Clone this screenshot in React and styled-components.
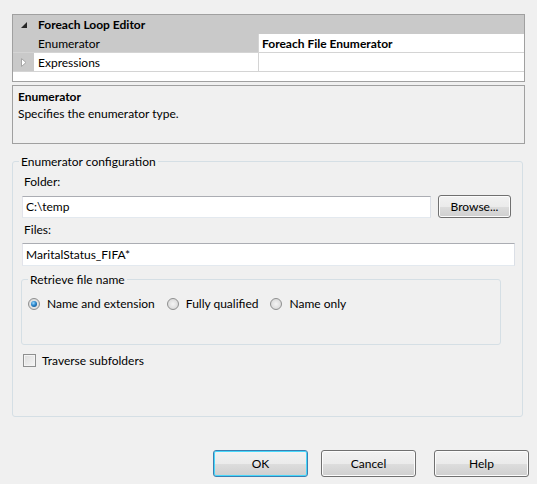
import React from 'react';
import styled, { createGlobalStyle } from 'styled-components';

const GlobalStyle = createGlobalStyle`
  html, body {
    margin: 0;
    background: #f0f0f0;
  }
  body {
    font-family: Lato, "Liberation Sans", sans-serif;
    font-size: 12px;
    color: #000;
  }
`;

const ExpandedIcon = () => (
  <svg width="6" height="6" viewBox="0 0 6 6">
    <polygon points="6,0 6,6 0,6" fill="#262626" />
  </svg>
);

const CollapsedIcon = () => (
  <svg width="6" height="9" viewBox="0 0 6 9">
    <polygon points="0.5,0.5 5,4.5 0.5,8.5" fill="#fff" stroke="#a6a6a6" />
  </svg>
);

const App = () => {
  return (
    <>
      <GlobalStyle />
      <Dialog>
        <PropertyGrid>
          <HeaderRow>
            <Margin><ExpandedIcon /></Margin>
            <HeaderText>Foreach Loop Editor</HeaderText>
          </HeaderRow>
          <GridRow>
            <Margin />
            <NameCell selected>Enumerator</NameCell>
            <ValueCell bold>Foreach File Enumerator</ValueCell>
          </GridRow>
          <GridRow>
            <Margin><CollapsedIcon /></Margin>
            <NameCell>Expressions</NameCell>
            <ValueCell />
          </GridRow>
        </PropertyGrid>

        <Description>
          <DescTitle>Enumerator</DescTitle>
          <div>Specifies the enumerator type.</div>
        </Description>

        <GroupBox>
          <Legend>Enumerator configuration</Legend>
          <GroupContent>
            <FieldLabel>Folder:</FieldLabel>
            <FieldRow>
              <TextBox>C:\temp</TextBox>
              <BrowseButton>Browse...</BrowseButton>
            </FieldRow>
            <FieldLabel>Files:</FieldLabel>
            <FieldRow>
              <TextBox tall>MaritalStatus_FIFA*</TextBox>
            </FieldRow>

            <InnerGroup>
              <InnerLegend>Retrieve file name</InnerLegend>
              <RadioRow>
                <RadioOption>
                  <Radio checked />
                  Name and extension
                </RadioOption>
                <RadioOption>
                  <Radio />
                  Fully qualified
                </RadioOption>
                <RadioOption>
                  <Radio />
                  Name only
                </RadioOption>
              </RadioRow>
            </InnerGroup>

            <CheckOption>
              <CheckBox />
              Traverse subfolders
            </CheckOption>
          </GroupContent>
        </GroupBox>

        <ButtonBar>
          <DialogButton isDefault>OK</DialogButton>
          <DialogButton>Cancel</DialogButton>
          <DialogButton gap={18}>Help</DialogButton>
        </ButtonBar>
      </Dialog>
    </>
  );
};

const Dialog = styled.div`
  width: 537px;
  height: 484px;
  box-sizing: border-box;
  padding: 14px 12px 7px 12px;
  display: flex;
  flex-direction: column;
`;

const PropertyGrid = styled.div`
  border: 1px solid #a0a0a0;
  background: #fff;
  height: 66px;
`;

const HeaderRow = styled.div`
  display: flex;
  align-items: center;
  height: 19px;
  background: #c9c9c9;
`;

const GridRow = styled.div`
  display: grid;
  grid-template-columns: 21px 224px 1fr;
  height: 18px;
  border-bottom: 1px solid #d4d4d4;
`;

const Margin = styled.div`
  width: 21px;
  height: 100%;
  background: #c9c9c9;
  display: flex;
  align-items: center;
  justify-content: center;
  padding-left: 1px;
  box-sizing: border-box;
`;

const HeaderText = styled.div`
  font-weight: bold;
  padding-left: 4px;
`;

const NameCell = styled.div`
  display: flex;
  align-items: center;
  padding-left: 4px;
  background: ${(p) => (p.selected ? '#c9c9c9' : '#fff')};
`;

const ValueCell = styled.div`
  display: flex;
  align-items: center;
  padding-left: 3px;
  border-left: 1px solid #d4d4d4;
  font-weight: ${(p) => (p.bold ? 'bold' : 'normal')};
`;

const Description = styled.div`
  margin-top: 3px;
  height: 59px;
  box-sizing: border-box;
  border: 1px solid #a0a0a0;
  padding: 2px 5px 0;
  line-height: 17px;
`;

const DescTitle = styled.div`
  font-weight: bold;
`;

const GroupBox = styled.fieldset`
  margin: 10px 2px 0 0;
  padding: 0;
  height: 263px;
  box-sizing: border-box;
  border: 1px solid #d5dfe5;
  border-radius: 3px;
  min-width: 0;
`;

const Legend = styled.legend`
  margin-left: 6px;
  padding: 0 2px;
  line-height: 15px;
`;

const GroupContent = styled.div`
  padding: 5px 7px 0 9px;
  display: flex;
  flex-direction: column;
`;

const FieldLabel = styled.div`
  line-height: 15px;
  padding-left: 2px;
  margin-bottom: 6px;
`;

const FieldRow = styled.div`
  display: flex;
  align-items: center;
  gap: 7px;
  margin-bottom: 4px;
`;

const TextBox = styled.div`
  flex: 1;
  height: ${(p) => (p.tall ? 23 : 22)}px;
  box-sizing: border-box;
  background: #fff;
  border: 1px solid;
  border-color: #abadb3 #dbdfe6 #e3e9ef #e2e3ea;
  padding-left: 3px;
  display: flex;
  align-items: center;
`;

const ButtonBase = styled.button`
  font: inherit;
  color: #000;
  box-sizing: border-box;
  border: 1px solid #707070;
  border-radius: 3px;
  background: linear-gradient(#f2f2f2 0%, #ebebeb 50%, #dddddd 51%, #cfcfcf 100%);
  box-shadow: inset 0 0 0 1px #fcfcfc;
  padding: 0;
`;

const BrowseButton = styled(ButtonBase)`
  width: 73px;
  height: 23px;
  margin-right: 4px;
`;

const InnerGroup = styled.fieldset`
  margin: 2px 14px 0 -1px;
  padding: 0;
  height: 73px;
  box-sizing: border-box;
  border: 1px solid #d5dfe5;
  border-radius: 3px;
  min-width: 0;
`;

const InnerLegend = styled.legend`
  margin-left: 6px;
  padding: 0 2px;
  line-height: 15px;
`;

const RadioRow = styled.div`
  display: flex;
  align-items: center;
  gap: 12px;
  padding: 9px 0 0 6px;
`;

const RadioOption = styled.label`
  display: flex;
  align-items: center;
  gap: 7px;
`;

const Radio = styled.span`
  position: relative;
  width: 12px;
  height: 12px;
  box-sizing: border-box;
  border-radius: 50%;
  border: 1px solid #8e8f8f;
  background: radial-gradient(circle at 50% 50%, #f4f4f4 0%, #dcdcdc 70%, #cfcfcf 100%);

  &::after {
    content: '';
    display: ${(p) => (p.checked ? 'block' : 'none')};
    position: absolute;
    left: 2px;
    top: 2px;
    width: 6px;
    height: 6px;
    border-radius: 50%;
    background: radial-gradient(circle at 40% 35%, #9fdcff 0%, #2a86cc 45%, #0d3f72 100%);
  }
`;

const CheckOption = styled.label`
  display: flex;
  align-items: center;
  gap: 6px;
  margin: 8px 0 0 1px;
  line-height: 15px;
`;

const CheckBox = styled.span`
  width: 13px;
  height: 13px;
  box-sizing: border-box;
  border: 1px solid #8e8f8f;
  background: linear-gradient(135deg, #dcdcdc 0%, #f6f6f6 100%);
  box-shadow: inset 0 0 0 1px #f4f4f4;
`;

const ButtonBar = styled.div`
  margin-top: auto;
  display: flex;
  justify-content: flex-end;
  margin-right: -4px;
`;

const DialogButton = styled(ButtonBase)`
  width: 95px;
  height: 27px;
  margin-left: ${(p) => p.gap || 13}px;
  border-color: ${(p) => (p.isDefault ? '#3c7fb1' : '#707070')};
  box-shadow: ${(p) => (p.isDefault ? 'inset 0 0 0 1px #48d8fb' : 'inset 0 0 0 1px #fcfcfc')};
`;

export default App;
